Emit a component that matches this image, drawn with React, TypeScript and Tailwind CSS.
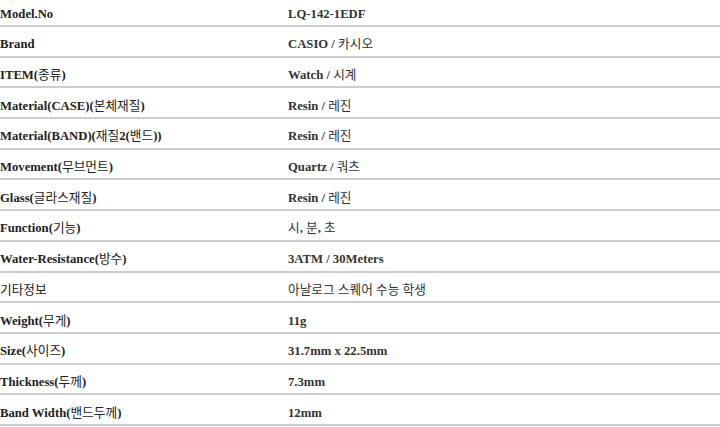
import React from 'react';

// Spec rows: label / value
const specs: [string, string][] = [
  ['Model.No', 'LQ-142-1EDF'],
  ['Brand', 'CASIO / 카시오'],
  ['ITEM(종류)', 'Watch / 시계'],
  ['Material(CASE)(본체재질)', 'Resin / 레진'],
  ['Material(BAND)(재질2(밴드))', 'Resin / 레진'],
  ['Movement(무브먼트)', 'Quartz / 쿼츠'],
  ['Glass(글라스재질)', 'Resin / 레진'],
  ['Function(기능)', '시, 분, 초'],
  ['Water-Resistance(방수)', '3ATM / 30Meters'],
  ['기타정보', '아날로그 스퀘어 수능 학생'],
  ['Weight(무게)', '11g'],
  ['Size(사이즈)', '31.7mm x 22.5mm'],
  ['Thickness(두께)', '7.3mm'],
  ['Band Width(밴드두께)', '12mm'],
];

const font = {
  fontFamily: '"Liberation Serif", "Noto Sans CJK KR", serif',
};

// Latin text is bold, Hangul falls back to a regular-weight sans
const Mixed: React.FC<{ text: string }> = ({ text }) => (
  <>
    {text.split(/([\uAC00-\uD7A3\s]*[\uAC00-\uD7A3]+)/).map((part, i) =>
      /[\uAC00-\uD7A3]/.test(part) ? (
        <span key={i} className="font-normal">
          {part}
        </span>
      ) : (
        <span key={i}>{part}</span>
      )
    )}
  </>
);

const App: React.FC = () => {
  return (
    <div className="w-[720px] h-[427px] overflow-hidden bg-white">
      <div className="-mt-[3.7px]" style={font}>
        {specs.map(([label, value]) => (
          <div
            key={label}
            className="flex h-[30.7px] items-center pt-[7px] border-b-2 border-[#cccccc] text-[12.7px] font-bold"
          >
            <div className="w-[288px] shrink-0 text-[#222] whitespace-pre">
              <Mixed text={label} />
            </div>
            <div className="flex-1 text-[#333] whitespace-pre">
              <Mixed text={value} />
            </div>
          </div>
        ))}
      </div>
    </div>
  );
};

export default App;
